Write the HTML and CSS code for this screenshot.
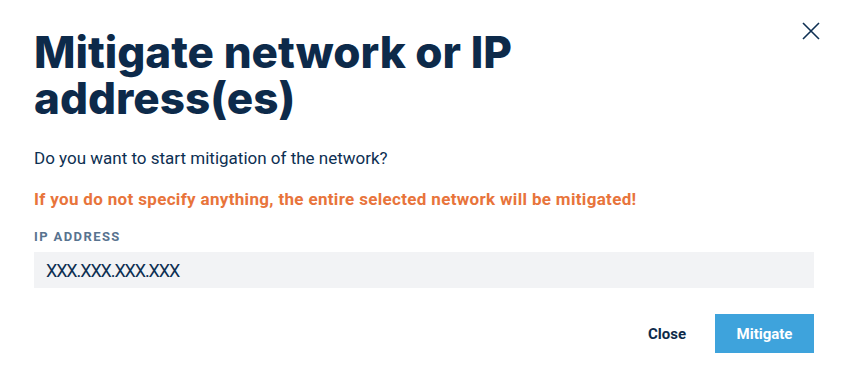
FILE: index.html
```html
<!DOCTYPE html>
<html lang="en">
  <head>
    <meta charset="UTF-8" />
    <meta name="viewport" content="width=device-width, initial-scale=1.0" />
    <title>Mitigate network</title>
    <link rel="stylesheet" href="styles.css">
  </head>
  <body>
    <div class="modal">
      <button class="fechar" type="button" aria-label="Close">
        <svg width="18" height="18" viewBox="0 0 18 18">
          <path d="M1 1 L17 17 M17 1 L1 17" stroke="#0d2f52" stroke-width="1.6" fill="none" />
        </svg>
      </button>
      <h1>Mitigate network or IP address(es)</h1>
      <p class="pergunta">Do you want to start mitigation of the network?</p>
      <p class="aviso">If you do not specify anything, the entire selected network will be mitigated!</p>
      <label class="campo">
        <span class="rotulo">IP ADDRESS</span>
        <input type="text" placeholder="XXX.XXX.XXX.XXX" />
      </label>
      <div class="botoes">
        <button type="button" class="btn-fechar">Close</button>
        <button type="button" class="btn-mitigar">Mitigate</button>
      </div>
    </div>
  </body>
</html>
```

FILE: styles.css
```css
body {
  margin: 0;
  background: #fff;
  font-family: Roboto, Arial, sans-serif;
  color: #0d2f52;
}

.modal {
  position: relative;
  padding: 29px 34px 0 34px;
}

.fechar {
  position: absolute;
  top: 22px;
  right: 28px;
  border: 0;
  background: none;
  padding: 0;
  cursor: pointer;
}

h1 {
  margin: 0;
  width: 520px;
  font-family: Inter, sans-serif;
  font-weight: 800;
  font-size: 44px;
  line-height: 46px;
  color: #0d2a4a;
}

.pergunta {
  margin: 25px 0 0 0;
  font-size: 17px;
  line-height: 24px;
}

.aviso {
  margin: 17px 0 0 0;
  font-size: 17px;
  line-height: 24px;
  font-weight: bold;
  letter-spacing: 0.33px;
  color: #e8743b;
}

.campo {
  display: block;
  margin-top: 18px;
}

.rotulo {
  display: block;
  font-size: 13px;
  font-weight: bold;
  letter-spacing: 1.4px;
  color: #58738f;
  line-height: 16px;
}

.campo input {
  display: block;
  box-sizing: border-box;
  width: 100%;
  height: 36px;
  margin-top: 7px;
  border: 0;
  background: #f2f3f5;
  padding: 0 12px;
  font-family: Roboto, Arial, sans-serif;
  font-size: 18px;
  letter-spacing: -1.1px;
  color: #0d2f52;
}

.campo input::placeholder {
  color: #0d2f52;
  opacity: 1;
}

.botoes {
  display: flex;
  justify-content: flex-end;
  gap: 12px;
  margin-top: 26px;
}

.botoes button {
  height: 39px;
  border: 0;
  font-family: Roboto, Arial, sans-serif;
  font-size: 15px;
  font-weight: bold;
  cursor: pointer;
}

.btn-fechar {
  background: none;
  color: #0d2a4a;
  padding: 0 17px;
}

.btn-mitigar {
  background: #3ea3dc;
  color: #fff;
  width: 99px;
}
```
